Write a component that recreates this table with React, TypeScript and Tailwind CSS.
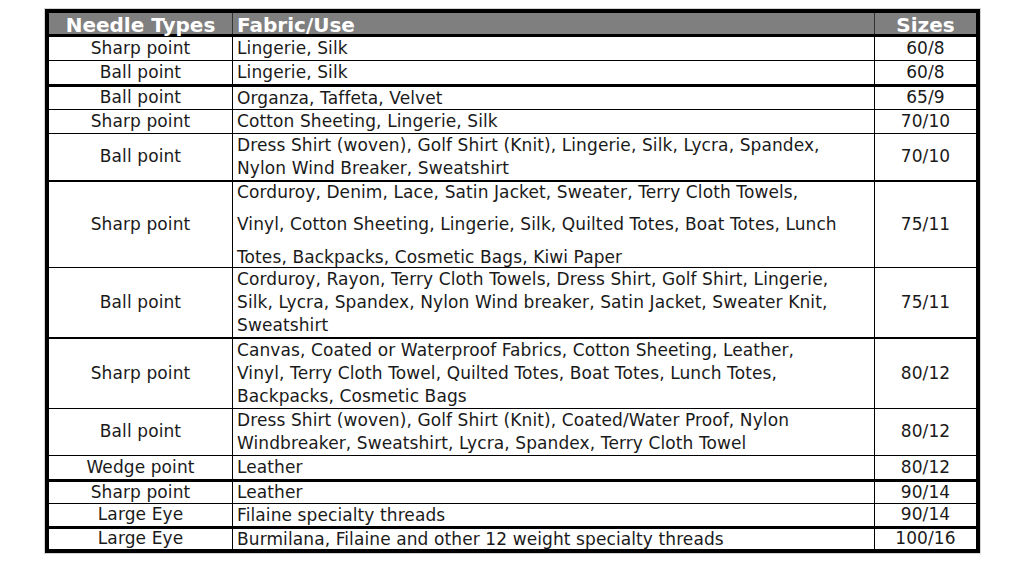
const rows = [
  { type: "Sharp point", use: ["Lingerie, Silk"], size: "60/8", h: "h-[24px]", b: "border-b" },
  { type: "Ball point", use: ["Lingerie, Silk"], size: "60/8", h: "h-[26px]", b: "border-b-[3px]" },
  { type: "Ball point", use: ["Organza, Taffeta, Velvet"], size: "65/9", h: "h-[23px]", b: "border-b" },
  { type: "Sharp point", use: ["Cotton Sheeting, Lingerie, Silk"], size: "70/10", h: "h-[24px]", b: "border-b" },
  {
    type: "Ball point",
    use: [
      "Dress Shirt (woven), Golf Shirt (Knit), Lingerie, Silk, Lycra, Spandex,",
      "Nylon Wind Breaker, Sweatshirt",
    ],
    size: "70/10",
    h: "h-[48px]",
    b: "border-b-2",
  },
  {
    type: "Sharp point",
    use: [
      "Corduroy, Denim, Lace, Satin Jacket, Sweater, Terry Cloth Towels,",
      "Vinyl, Cotton Sheeting, Lingerie, Silk, Quilted Totes, Boat Totes, Lunch",
      "Totes, Backpacks, Cosmetic Bags, Kiwi Paper",
    ],
    size: "75/11",
    h: "h-[86px]",
    b: "border-b",
    wide: true,
  },
  {
    type: "Ball point",
    use: [
      "Corduroy, Rayon, Terry Cloth Towels, Dress Shirt, Golf Shirt, Lingerie,",
      "Silk, Lycra, Spandex, Nylon Wind breaker, Satin Jacket, Sweater Knit,",
      "Sweatshirt",
    ],
    size: "75/11",
    h: "h-[71px]",
    b: "border-b-2",
  },
  {
    type: "Sharp point",
    use: [
      "Canvas, Coated or Waterproof Fabrics, Cotton Sheeting, Leather,",
      "Vinyl, Terry Cloth Towel, Quilted Totes, Boat Totes, Lunch Totes,",
      "Backpacks, Cosmetic Bags",
    ],
    size: "80/12",
    h: "h-[70px]",
    b: "border-b",
  },
  {
    type: "Ball point",
    use: [
      "Dress Shirt (woven), Golf Shirt (Knit), Coated/Water Proof, Nylon",
      "Windbreaker, Sweatshirt, Lycra, Spandex, Terry Cloth Towel",
    ],
    size: "80/12",
    h: "h-[47px]",
    b: "border-b",
  },
  { type: "Wedge point", use: ["Leather"], size: "80/12", h: "h-[26px]", b: "border-b-[3px]" },
  { type: "Sharp point", use: ["Leather"], size: "90/14", h: "h-[22px]", b: "border-b" },
  { type: "Large Eye", use: ["Filaine specialty threads"], size: "90/14", h: "h-[25px]", b: "border-b-[3px]" },
  {
    type: "Large Eye",
    use: ["Burmilana, Filaine and other 12 weight specialty threads"],
    size: "100/16",
    h: "h-[20px]",
    b: "",
  },
]

export default function App() {
  return (
    <div className="w-[1024px] h-[564px] bg-white pt-[9px] pl-[45px] font-['DejaVu_Sans',Verdana,sans-serif] text-[#1a1a1a]">
      <div className="w-[935px] border-4 border-black shadow-[0_0_0_1px_#d4d4d4]">
        {/* Header */}
        <div className="flex h-[24px] border-b-[3px] border-black bg-[#7f7f7f] text-white font-bold text-[20px] leading-[21px]">
          <div className="w-[184px] border-r border-[#333] flex items-center justify-center pt-[3px]">Needle Types</div>
          <div className="w-[642px] border-r border-[#333] flex items-center pl-[4px] pt-[3px]">Fabric/Use</div>
          <div className="flex-1 flex items-center justify-center pt-[3px]">Sizes</div>
        </div>

        {rows.map((r, i) => (
          <div key={i} className={`flex ${r.h} ${r.b} border-black text-[17px] tracking-[0.1px]`}>
            <div className="w-[184px] shrink-0 border-r border-black flex items-center justify-center">{r.type}</div>
            <div
              className={`w-[642px] shrink-0 border-r border-black flex flex-col justify-center pl-[4px] whitespace-nowrap ${
                r.wide ? "leading-[32.5px]" : "leading-[23px]"
              }`}
            >
              {r.use.map((line, j) => (
                <span key={j}>{line}</span>
              ))}
            </div>
            <div className="flex-1 flex items-center justify-center">{r.size}</div>
          </div>
        ))}
      </div>
    </div>
  )
}
